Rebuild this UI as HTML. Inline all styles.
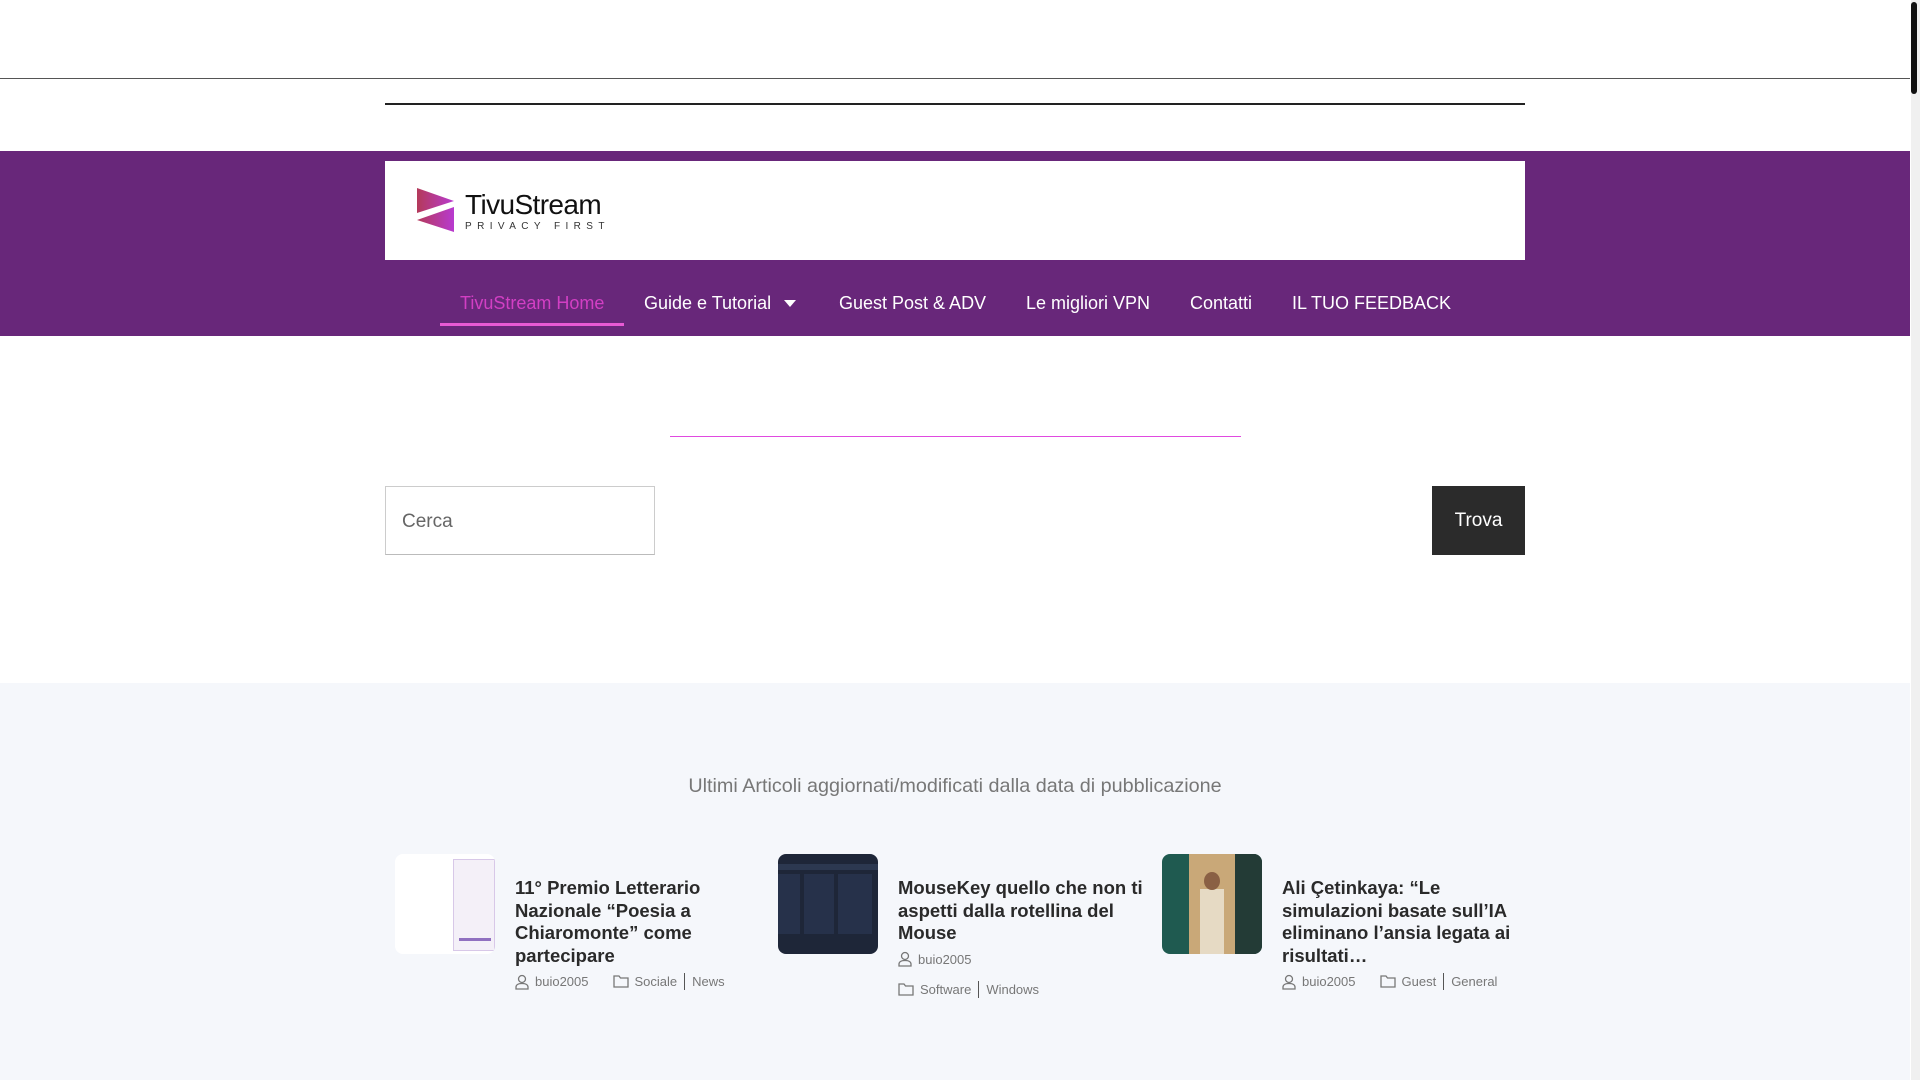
<!DOCTYPE html>
<html><head><meta charset="utf-8"><style>
*{margin:0;padding:0;box-sizing:border-box}
body{width:1920px;height:1080px;overflow:hidden;background:#fff;font-family:"Liberation Sans",Arial,sans-serif;position:relative}
.abs{position:absolute}
.nav a{position:absolute;top:293px;font-size:18px;color:#fff;white-space:nowrap}
.card .img{position:absolute;width:100px;height:100px;border-radius:8px;overflow:hidden;top:854px}
.card h3{position:absolute;top:877px;font-size:18.5px;line-height:22.5px;font-weight:bold;color:#2a2a2a;width:245px}
.meta{position:absolute;font-size:13px;color:#777;white-space:nowrap;display:flex;align-items:center;gap:6px}
.sep{display:inline-block;width:1px;height:17px;background:#555;margin:0 1px}
</style></head><body>
<div class="abs" style="left:0;top:78px;width:1910px;height:1px;background:#555"></div>
<div class="abs" style="left:1911px;top:0;width:9px;height:1080px;background:#f0f0f0"></div>
<div class="abs" style="left:1911px;top:2px;width:6px;height:92px;background:#111;border-radius:3px"></div>
<div class="abs" style="left:385px;top:103px;width:1140px;height:2px;background:#222"></div>
<div class="abs" style="left:0;top:151px;width:1910px;height:185px;background:#68277a"></div>
<div class="abs" style="left:385px;top:161px;width:1140px;height:99px;background:#fff"></div>
<svg class="abs" style="left:417px;top:188px" width="38" height="46" viewBox="0 0 38 46"><defs><linearGradient id="g" x1="0" x2="1"><stop offset="0" stop-color="#b43a5a"/><stop offset="1" stop-color="#b83ad0"/></linearGradient></defs><polygon points="0,0 37,13 0,25" fill="url(#g)"/><polygon points="37,19 37,44 0,32" fill="url(#g)"/></svg>
<div class="abs" style="left:465px;top:189px;font-size:28px;color:#111;letter-spacing:-0.6px">TivuStream</div>
<div class="abs" style="left:465px;top:221px;font-size:10px;color:#333;letter-spacing:5.4px">PRIVACY FIRST</div>
<div class="nav">
<a style="left:460px;color:#d23fc4">TivuStream Home</a>
<a style="left:644px">Guide e Tutorial</a>
<a style="left:839px">Guest Post &amp; ADV</a>
<a style="left:1026px">Le migliori VPN</a>
<a style="left:1190px">Contatti</a>
<a style="left:1292px">IL TUO FEEDBACK</a>
</div>
<svg class="abs" style="left:784px;top:300px" width="12" height="7"><polygon points="0,0 12,0 6,7" fill="#fff"/></svg>
<div class="abs" style="left:440px;top:323px;width:184px;height:3px;background:#e85ad4"></div>
<div class="abs" style="left:670px;top:436px;width:571px;height:1px;background:#e04ae0"></div>
<div class="abs" style="left:385px;top:486px;width:270px;height:69px;border:1px solid #ccc;border-bottom-color:#bbb;font-size:19px;color:#666;padding:24px 0 0 16px">Cerca</div>
<div class="abs" style="left:1432px;top:486px;width:93px;height:69px;background:#2b2b2b;color:#fff;font-size:19px;text-align:center;line-height:69px">Trova</div>
<div class="abs" style="left:0;top:683px;width:1910px;height:397px;background:#f5f7fb"></div>
<div class="abs" style="left:0;top:775px;width:1910px;text-align:center;font-size:19.8px;color:#777">Ultimi Articoli aggiornati/modificati dalla data di pubblicazione</div>
<div class="card">
<div class="img" style="left:395px;background:#fff"><div style="position:absolute;left:58px;top:5px;width:42px;height:92px;background:#f4f0f8;border:1px solid #d8c8e8"></div><div style="position:absolute;left:64px;top:84px;width:32px;height:3px;background:#9070c0"></div></div>
<h3 style="left:515px">11° Premio Letterario Nazionale “Poesia a Chiaromonte” come partecipare</h3>
<div class="meta" style="left:515px;top:973px"><svg width="14" height="16" viewBox="0 0 14 16"><circle cx="7" cy="5" r="3.5" fill="none" stroke="#777" stroke-width="1.3"/><path d="M1 15v-2c0-2 2-3.5 6-3.5s6 1.5 6 3.5v2z" fill="none" stroke="#777" stroke-width="1.3"/></svg><span>buio2005</span><span style="width:12px"></span><svg width="16" height="13" viewBox="0 0 16 13"><path d="M1 1h5l1.5 2H15v9H1z" fill="none" stroke="#777" stroke-width="1.3"/></svg><span>Sociale</span><span class="sep"></span><span>News</span></div>
</div>
<div class="card">
<div class="img" style="left:778px;background:#1e2638"><div style="position:absolute;left:0;top:10px;width:100px;height:6px;background:#2c3850"></div><div style="position:absolute;left:0;top:20px;width:22px;height:60px;background:#26314a"></div><div style="position:absolute;left:26px;top:20px;width:30px;height:60px;background:#26314a"></div><div style="position:absolute;left:60px;top:20px;width:34px;height:60px;background:#26314a"></div></div>
<h3 style="left:898px">MouseKey quello che non ti aspetti dalla rotellina del Mouse</h3>
<div class="meta" style="left:898px;top:951px"><svg width="14" height="16" viewBox="0 0 14 16"><circle cx="7" cy="5" r="3.5" fill="none" stroke="#777" stroke-width="1.3"/><path d="M1 15v-2c0-2 2-3.5 6-3.5s6 1.5 6 3.5v2z" fill="none" stroke="#777" stroke-width="1.3"/></svg><span>buio2005</span></div>
<div class="meta" style="left:898px;top:981px"><svg width="16" height="13" viewBox="0 0 16 13"><path d="M1 1h5l1.5 2H15v9H1z" fill="none" stroke="#777" stroke-width="1.3"/></svg><span>Software</span><span class="sep"></span><span>Windows</span></div>
</div>
<div class="card">
<div class="img" style="left:1162px;background:#1f5a50"><div style="position:absolute;left:27px;top:0;width:46px;height:100px;background:#c9a878"></div><div style="position:absolute;left:38px;top:35px;width:24px;height:65px;background:#e6dac4"></div><div style="position:absolute;left:42px;top:18px;width:16px;height:18px;border-radius:50%;background:#8a6044"></div><div style="position:absolute;left:73px;top:0;width:27px;height:100px;background:#233b36"></div></div>
<h3 style="left:1282px">Ali Çetinkaya: “Le simulazioni basate sull’IA eliminano l’ansia legata ai risultati…</h3>
<div class="meta" style="left:1282px;top:973px"><svg width="14" height="16" viewBox="0 0 14 16"><circle cx="7" cy="5" r="3.5" fill="none" stroke="#777" stroke-width="1.3"/><path d="M1 15v-2c0-2 2-3.5 6-3.5s6 1.5 6 3.5v2z" fill="none" stroke="#777" stroke-width="1.3"/></svg><span>buio2005</span><span style="width:12px"></span><svg width="16" height="13" viewBox="0 0 16 13"><path d="M1 1h5l1.5 2H15v9H1z" fill="none" stroke="#777" stroke-width="1.3"/></svg><span>Guest</span><span class="sep"></span><span>General</span></div>
</div>
</body></html>
